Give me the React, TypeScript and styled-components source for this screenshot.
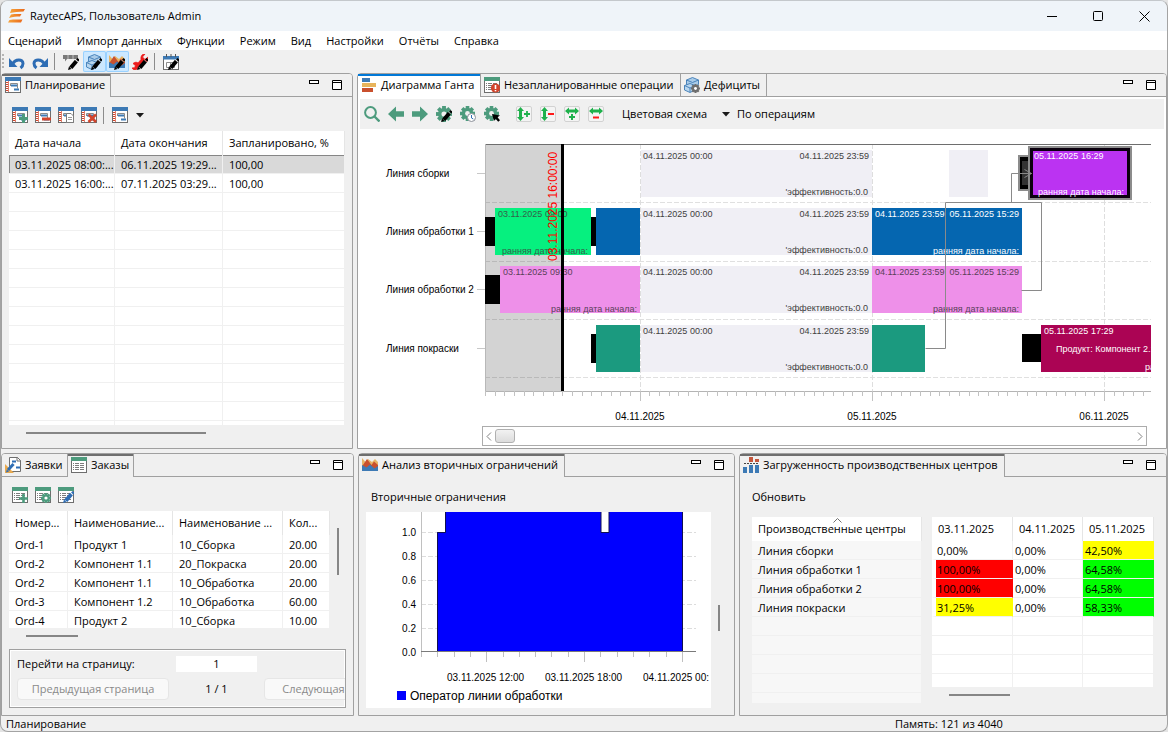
import React from "react";
import styled, { createGlobalStyle, css } from "styled-components";

const GlobalStyle = createGlobalStyle`
  *, *::before, *::after { box-sizing: border-box; }
  body {
    margin: 0;
    background: #e4e4e4;
    color: #000;
    font: 11px/16px "Open Sans", "Noto Sans", sans-serif;
  }
  button, input { font: inherit; color: inherit; }
  button { border: 0; padding: 0; background: none; white-space: nowrap; }
  svg { flex-shrink: 0; }
`;

/* ---------- window ---------- */

const Window = styled.div`
  min-height: 100vh;
  display: flex;
  flex-direction: column;
  border: 1px solid #a3a3a3;
  border-top-color: #c4c8cc;
  border-radius: 8px;
  overflow: hidden;
  background: #f0f0f0;
`;

const TitleBar = styled.header`
  height: 30px;
  display: flex;
  align-items: center;
  padding-left: 7px;
  background: #eff4f9;
`;

const Title = styled.h1`
  flex: 1;
  margin: 0 0 0 5px;
  font-size: 11px;
  font-weight: 400;
`;

const WindowButton = styled.button`
  width: 46px;
  height: 30px;
  display: grid;
  place-items: center;
`;

const MenuBar = styled.nav`
  height: 19px;
  display: flex;
  background: #fff;
`;

const MenuItem = styled.button`
  padding: 0 8px 0 7px;
  line-height: 19px;
`;

const MainToolbar = styled.div`
  height: 23px;
  display: flex;
  align-items: center;
  padding-left: 1px;
`;

const Grip = styled.span`
  width: 2px;
  height: 15px;
  margin-right: 2px;
  background: repeating-linear-gradient(#b4b4b4 0 2px, transparent 2px 4px);
`;

const Separator = styled.span`
  width: 1px;
  height: 17px;
  margin: 0 5px 0 2px;
  background: #8c8c8c;
`;

const IconButton = styled.button<{ $active?: boolean }>`
  width: 23px;
  height: 21px;
  display: flex;
  align-items: center;
  padding-left: 3px;
  border-radius: 2px;
  ${(p) =>
    p.$active &&
    css`
      background: #cce8ff;
      box-shadow: inset 0 0 0 1px #99d1ff;
    `}
`;

const Workspace = styled.main`
  flex: 1;
  display: grid;
  grid-template-rows: minmax(376px, 376fr) minmax(263px, 263fr);
  gap: 4px;
`;

const PanelRow = styled.div<{ $columns: string }>`
  display: grid;
  grid-template-columns: ${(p) => p.$columns};
  gap: 4px;
`;

const StatusBar = styled.footer`
  height: 15px;
  display: grid;
  grid-template-columns: 889fr 272fr;
  padding-left: 5px;
  line-height: 15px;
`;

/* ---------- panels ---------- */

const PanelFrame = styled.section<{ $white?: boolean }>`
  min-width: 0;
  display: flex;
  flex-direction: column;
  border: 1px solid #a0a0a0;
  border-radius: 4px 4px 0 0;
  background: ${(p) => (p.$white ? "#fff" : "#f0f0f0")};
`;

const PanelHeader = styled.div`
  height: 23px;
  display: flex;
  background: #f0f0f0;
  border-radius: 3px 3px 0 0;
`;

const Tab = styled.button<{ $width: number; $state: "idle" | "active" | "focused" }>`
  width: ${(p) => p.$width}px;
  display: flex;
  align-items: center;
  gap: 4px;
  padding: 0 0 0 3px;
  border-right: 1px solid #a0a0a0;
  border-bottom: 1px solid #a0a0a0;
  ${(p) =>
    p.$state !== "idle" &&
    css`
      border-bottom: 0;
      padding-bottom: 1px;
      background: ${p.$state === "focused" ? "#fff" : "#f0f0f0"};
      box-shadow: inset 0 2px 0 ${p.$state === "focused" ? "#0078d7" : "#6e6e6e"};
    `}
`;

const HeaderTail = styled.div`
  flex: 1;
  display: flex;
  justify-content: flex-end;
  align-items: flex-start;
  gap: 12px;
  padding: 5px 9px 0 0;
  border-bottom: 1px solid #a0a0a0;
`;

const HeaderButton = styled.button`
  width: 11px;
  height: 11px;
  display: block;
`;

const PanelBody = styled.div`
  flex: 1;
  min-height: 0;
  display: flex;
  flex-direction: column;
  padding: 0 7px;
`;

const PanelToolbar = styled.div`
  height: 34px;
  display: flex;
  align-items: center;
  padding-top: 2px;
`;

const ArrowButton = styled.button`
  width: 16px;
  height: 16px;
  display: grid;
  place-items: center;
`;

const Split = styled.div`
  flex: 1 1 0;
  min-height: 0;
  display: flex;
`;

const VerticalTrack = styled.div<{ $width: number; $offset: number }>`
  width: ${(p) => p.$width}px;
  padding: ${(p) => p.$offset}px 0 0 7px;
`;

const HorizontalTrack = styled.div<{ $height: number }>`
  height: ${(p) => p.$height}px;
  padding: 7px 0 0 17px;
`;

const Thumb = styled.div<{ $width: number; $height: number }>`
  width: ${(p) => p.$width}px;
  height: ${(p) => p.$height}px;
  background: #868686;
`;

/* ---------- tables ---------- */

const TableBox = styled.div<{ $muted?: boolean; $grow?: number }>`
  flex: ${(p) => p.$grow ?? 1} 1 0;
  min-width: 0;
  min-height: 0;
  overflow: hidden;
  background: ${(p) => (p.$muted ? "#f7f7f7" : "#fff")};
`;

const DataTable = styled.table`
  width: 100%;
  table-layout: fixed;
  border-collapse: separate;
  border-spacing: 0;
`;

const HeadCell = styled.th`
  height: 24px;
  padding: 0 0 0 6px;
  border-right: 1px solid #e5e5e5;
  background: #fff;
  font-weight: 400;
  text-align: left;
  white-space: nowrap;
  overflow: hidden;
`;

const SortedHeadCell = styled(HeadCell)`
  position: relative;
`;

const SortMark = styled.svg`
  position: absolute;
  top: 1px;
  left: 50%;
  margin-left: -4px;
`;

const Cell = styled.td`
  height: 19px;
  padding: 2px 0 0 6px;
  border-right: 1px solid #f0f0f0;
  border-bottom: 1px solid #f0f0f0;
  line-height: 16px;
  white-space: nowrap;
  overflow: hidden;
`;

const BodyRow = styled.tr<{ $selected?: boolean }>`
  ${(p) =>
    p.$selected &&
    css`
      & > td {
        background: #d9d9d9;
        box-shadow: inset 0 1px 0 #868686;
      }
      & > td:first-child {
        box-shadow: inset 1px 1px 0 #868686;
      }
    `}
`;

const LoadCell = styled(Cell)<{ $fill?: string; $first?: boolean }>`
  padding-left: ${(p) => (p.$first ? 1 : 2)}px;
  border-left: ${(p) => (p.$first ? "4px solid #fff" : 0)};
  border-right-color: ${(p) => p.$fill ?? "#f0f0f0"};
  background: ${(p) => p.$fill ?? "transparent"};
`;

/* ---------- pagination ---------- */

const Pager = styled.fieldset`
  height: 59px;
  min-width: 0;
  margin: 0 0 7px;
  padding: 6px 0 0 7px;
  display: grid;
  grid-template-columns: 152px 81px 152px;
  grid-template-rows: 16px 22px;
  gap: 6px 7px;
  align-items: center;
  border: 1px solid #a0a0a0;
  box-shadow: inset 0 0 0 1px #fff;
  overflow: hidden;
`;

const PageInput = styled.input`
  width: 81px;
  height: 16px;
  padding: 0;
  border: 0;
  background: #fff;
  text-align: center;
`;

const PageButton = styled.button`
  height: 22px;
  border: 1px solid #e6e6e6;
  border-radius: 4px;
  background: #f9f9f9;
  color: #8a8a8a;
`;

const PageCount = styled.span`
  text-align: center;
`;

const PagerGap = styled.span``;

/* ---------- Gantt ---------- */

const GanttToolbar = styled.div`
  height: 30px;
  margin: 2px 2px 0;
  display: flex;
  align-items: center;
  background: #f0f0f0;
`;

const GanttTool = styled.button<{ $gap?: number }>`
  width: 24px;
  height: 24px;
  margin-left: ${(p) => p.$gap ?? 0}px;
  display: grid;
  place-items: center;
`;

const SchemeButton = styled.button`
  display: flex;
  align-items: center;
  justify-content: space-between;
  width: 109px;
  margin-left: 14px;
`;

const ModeButton = styled.button`
  margin-left: 6px;
`;

const GanttCanvas = styled.svg`
  flex: 1 0 297px;
  width: calc(100% - 15px);
  min-height: 297px;
  display: block;
  overflow: hidden;
  font-family: "Liberation Sans", Arial, sans-serif;
`;

const GanttScroll = styled.div`
  height: 20px;
  margin: 0 19px 2px 124px;
  padding: 0 3px;
  display: flex;
  align-items: center;
  gap: 3px;
  border: 1px solid #acacac;
`;

const ScrollThumb = styled.span`
  width: 20px;
  height: 14px;
  border: 1px solid #b0b0b0;
  border-radius: 3px;
  background: linear-gradient(#f2f2f2, #dcdcdc);
`;

const Spacer = styled.span`
  flex: 1;
`;

/* ---------- charts and labels ---------- */

const Caption = styled.div`
  height: 35px;
  padding: 12px 0 0 5px;
`;

const LoadBody = styled(PanelBody)`
  padding: 0 12px 12px;
`;

const RefreshButton = styled.button`
  height: 40px;
  align-self: flex-start;
`;

const ChartBox = styled.div`
  flex: 1;
  min-width: 0;
  margin-bottom: 7px;
  background: #fff;
`;

const ChartSvg = styled.svg`
  width: 100%;
  height: 196px;
  display: block;
  overflow: hidden;
  font-family: "Liberation Sans", Arial, sans-serif;
`;

const RightColumn = styled.div`
  flex: 222 1 0;
  min-width: 0;
  margin-left: 10px;
  display: flex;
  flex-direction: column;
`;

/* ---------- icons ---------- */

const Icon = ({ children }: { children: React.ReactNode }) => (
  <svg width="16" height="16" viewBox="0 0 16 16" aria-hidden="true">
    {children}
  </svg>
);

const LogoIcon = () => (
  <svg width="17" height="16" viewBox="0 0 17 16" aria-hidden="true">
    <defs>
      <linearGradient id="logo" x1="0" x2="1">
        <stop offset="0" stopColor="#f5a33a" />
        <stop offset="1" stopColor="#ea6a1c" />
      </linearGradient>
    </defs>
    <g fill="url(#logo)">
      <path d="M3.500 1H17l-1.500 2.500C10 4 6 4 2 5z" />
      <path d="M3 6.500c4-.8 7-.5 10.500-.5L12 8.500c-4 0-7 0-11 1.500z" />
      <path d="M1.500 12c4-.8 8-.5 13-.5L13 14.500H0z" />
    </g>
  </svg>
);

const Pencil = ({ color = "#000" }: { color?: string }) => (
  <>
    <path d="M7.800 13.800L13.500 7" stroke={color} strokeWidth="4" />
    <path d="M13.800 4.800l2.200 2" stroke={color} strokeWidth="2.200" />
    <path d="M5 16l1-3.500 2.500 2.500z" fill={color} />
    <path d="M12.200 5.800l2.600 2.300" stroke="#fff" strokeWidth=".5" />
  </>
);

const Gear = ({ cx, cy, r, color, hole = "#f0f0f0" }: { cx: number; cy: number; r: number; color: string; hole?: string }) => (
  <g fill={color} transform={`translate(${cx} ${cy})`}>
    {[0, 45, 90, 135].map((a) => (
      <rect key={a} x={-r * 0.24} y={-r} width={r * 0.48} height={r * 2} transform={`rotate(${a})`} />
    ))}
    <circle r={r * 0.76} />
    <circle r={r * 0.32} fill={hole} />
  </g>
);

const UndoIcon = () => (
  <Icon>
    <path d="M4 9.500C6 5 14 4.500 14 9.500c0 2-.8 3.200-2.500 4.500" fill="none" stroke="#2e6db4" strokeWidth="3" />
    <path d="M0 4v9h8.500z" fill="#2e6db4" />
  </Icon>
);

const RedoIcon = () => (
  <Icon>
    <path d="M12 9.500C10 5 2 4.500 2 9.500c0 2 .8 3.200 2.500 4.500" fill="none" stroke="#2e6db4" strokeWidth="3" />
    <path d="M16 4v9H7.500z" fill="#2e6db4" />
  </Icon>
);

const CommentEditIcon = () => (
  <Icon>
    <path d="M0 1h15v4H4L2 7.500V5H0z" fill="#7a7a7a" />
    <path d="M5 1v4M10 1v4" stroke="#f0f0f0" strokeWidth=".6" />
    <Pencil />
  </Icon>
);

const Boxes = () => (
  <>
    <path d="M8.500.5l6 2.500v4.500l-6 3-6-3V3z" fill="#a9cbe8" stroke="#3d7ab5" strokeWidth=".9" />
    <path d="M2.500 3l6 2.500 6-2.500" fill="none" stroke="#3d7ab5" strokeWidth=".9" />
    <path d="M6 6.500l5 2v4.500l-5 2.500-5.500-2.500V8.500z" fill="#b9d6ee" stroke="#3d7ab5" strokeWidth=".9" />
    <path d="M.5 8.500L6 11l5-2.500M6 11v4" fill="none" stroke="#3d7ab5" strokeWidth=".9" />
  </>
);

const BoxesEditIcon = () => (
  <Icon>
    <Boxes />
    <Pencil />
  </Icon>
);

const DeficitIcon = () => (
  <Icon>
    <Boxes />
    <Gear cx={11.500} cy={11.500} r={4.500} color="#6e6e6e" hole="#fff" />
  </Icon>
);

const Area = () => (
  <>
    <path d="M0 14V1l3.500 4L6 2l4 3 3-3 3 3v9z" fill="#e8b465" />
    <path d="M0 9.500L5 2l4.500 6L12 4.500 16 8v6H0z" fill="#c9502e" />
    <path d="M0 14V8l4.500 2.500L8 7.500l4.500 4L16 9v5z" fill="#3d7ab5" />
  </>
);

const AreaIcon = () => (
  <Icon>
    <Area />
  </Icon>
);

const AreaEditIcon = () => (
  <Icon>
    <Area />
    <Pencil />
  </Icon>
);

const WrenchEditIcon = () => (
  <Icon>
    <path d="M13 0l-2.500 3L13 5.500l3-2.500c.6 4.500-2.500 6.500-5 5.500L6 13c-.8 3.500-4.500 4-6 1l2.800-.3.5-2.200L1 9.500C3 7.800 5 8 6 9l3-3.500C8.500 2 10 0 13 0z" fill="#ec1c1c" stroke="#ec1c1c" strokeWidth=".8" />
    <Pencil />
  </Icon>
);

const CalendarEditIcon = () => (
  <Icon>
    <rect x=".5" y="2.500" width="15" height="13" fill="#fff" stroke="#6e6e6e" />
    <path d="M0 2h16v3.500H0z" fill="#3d7ab5" />
    <path d="M3.500 0v3M8 0v3M12.500 0v3" stroke="#555" />
    <path d="M3.500 8.500h8v5h-8zM7.500 8.500v5" fill="none" stroke="#8c8c8c" />
    <Pencil />
  </Icon>
);

const PlanBase = () => (
  <>
    <rect x=".5" y=".5" width="15" height="15" fill="#fff" stroke="#6e6e6e" />
    <path d="M0 0h16v4H0z" fill="#3d7ab5" />
    <path d="M2 5v10" stroke="#d2452c" strokeWidth="2" strokeDasharray="1 1" />
    <path d="M3.500 4v11" stroke="#d2452c" strokeWidth=".7" />
    <path d="M5.500 9V6.500h7v5" stroke="#8a8a8a" fill="none" />
    <path d="M6 8.500h6M9 12.500h5" stroke="#3d7ab5" strokeWidth="2" />
  </>
);

type Overlay = "add" | "remove" | "copy" | "delete" | "none";

const PlanIcon = ({ overlay = "none" }: { overlay?: Overlay }) => (
  <Icon>
    <PlanBase />
    {overlay === "add" && <path d="M11.500 7v9M7 11.500h9" stroke="#4d9b7d" strokeWidth="3" />}
    {overlay === "remove" && <path d="M7 12h9" stroke="#d2452c" strokeWidth="3" />}
    {overlay === "copy" && (
      <>
        <path d="M8.500 6.500h4.500l2.500 2.500v6.500h-7z" fill="#fff" stroke="#7c7c7c" />
        <path d="M10 10.500h4M10 12.500h4" stroke="#9a9a9a" />
      </>
    )}
    {overlay === "delete" && <path d="M7.500 7.500l7.500 7.500M15 7.500L7.500 15" stroke="#d2452c" strokeWidth="2.600" />}
  </Icon>
);

const ListIcon = ({ children }: { children?: React.ReactNode }) => (
  <Icon>
    <rect x=".5" y="1" width="15" height="14.500" fill="#fff" stroke="#6e6e6e" />
    <path d="M0 0h16v4H0z" fill="#4d9b7d" />
    <path d="M2 6.500h12M2 8.500h12M2 10.500h12M2 12.500h12" stroke="#7c7c7c" strokeDasharray="1 1 4 1 4 1" />
    {children}
  </Icon>
);

const UnplannedIcon = () => (
  <ListIcon>
    <circle cx="11.500" cy="11" r="4.600" fill="#d2452c" />
    <path d="M11.500 8v4M11.500 13v1.200" stroke="#fff" strokeWidth="1.600" />
  </ListIcon>
);

const OrderAddIcon = () => (
  <ListIcon>
    <path d="M11.500 7v9M7 11.500h9" stroke="#4d9b7d" strokeWidth="2.600" />
  </ListIcon>
);

const OrderGearIcon = () => (
  <ListIcon>
    <Gear cx={11} cy={11} r={5} color="#4d9b7d" hole="#fff" />
  </ListIcon>
);

const OrderEditIcon = () => (
  <ListIcon>
    <Pencil color="#2e6db4" />
  </ListIcon>
);

const RequestIcon = () => (
  <Icon>
    <path d="M4.500.5h8l3 3v11h-11z" fill="#fff" stroke="#6e6e6e" />
    <path d="M12 0v4h4" fill="none" stroke="#6e6e6e" />
    <path d="M7 4.500h4M11 10.500h4" stroke="#2e6db4" strokeWidth="2" />
    <path d="M0 7v9h9z" fill="#e8a94e" />
    <path d="M3 13L8.500 7" stroke="#2e6db4" strokeWidth="3" />
    <path d="M1 15.500l.8-3 2.200 2z" fill="#2e6db4" />
  </Icon>
);

const GanttIcon = () => (
  <Icon>
    <path d="M1 1h8v4H1z" fill="#3d7ab5" />
    <path d="M1 6h14v4H1z" fill="#e8b45c" />
    <path d="M1 11h11v4H1z" fill="#c9502e" />
  </Icon>
);

const LoadIcon = () => (
  <Icon>
    <path d="M6 0h4v5H6zM12 2h4v3h-4z" fill="#c4563c" />
    <path d="M1 6.500h15" stroke="#444" strokeDasharray="2 1" />
    <path d="M0 10h4v6H0zM6 8h4v8H6zM12 8h4v8h-4z" fill="#3d7ab5" />
  </Icon>
);

const SearchIcon = () => (
  <Icon>
    <circle cx="6.500" cy="6.500" r="5.400" fill="none" stroke="#4d9b7d" strokeWidth="2" />
    <path d="M10.500 10.500l5 5" stroke="#4d9b7d" strokeWidth="2.400" />
  </Icon>
);

const ArrowLeftIcon = () => (
  <Icon>
    <path d="M0 8l8-7.500v4.800h8v5.400H8v4.800z" fill="#4d9b7d" />
  </Icon>
);

const ArrowRightIcon = () => (
  <Icon>
    <path d="M16 8L8 .5v4.800H0v5.400h8v4.800z" fill="#4d9b7d" />
  </Icon>
);

const GearEditIcon = () => (
  <Icon>
    <Gear cx={8} cy={8} r={8} color="#4d9b7d" />
    <Pencil />
  </Icon>
);

const GearClockIcon = () => (
  <Icon>
    <Gear cx={7.500} cy={7.500} r={7.500} color="#4d9b7d" />
    <circle cx="11.500" cy="11.500" r="4" fill="#fff" stroke="#8a8f98" />
    <path d="M11.500 9v3l1.800 1" fill="none" stroke="#2e6db4" />
  </Icon>
);

const GearCursorIcon = () => (
  <Icon>
    <Gear cx={7.500} cy={7.500} r={7.500} color="#4d9b7d" />
    <path d="M8 8l8 1.500-2.500 1.700 2.500 3-1.800 1.600-2.600-3L10 15z" fill="#000" />
  </Icon>
);

const ZoomIcon = ({ axis, sign }: { axis: "v" | "h"; sign: "+" | "-" }) => (
  <Icon>
    <rect x=".5" y=".5" width="15" height="15" rx="1.500" fill="#f4f4f4" stroke="#d2d2d2" />
    {axis === "v" ? (
      <path d="M4.500 1L8 5H6v6h2l-3.500 4L1 11h2V5H1z" fill="#1fb14c" />
    ) : (
      <path d="M1 5l4-3.500v2h6v-2L15 5l-4 3.500v-2H5v2z" fill="#1fb14c" />
    )}
    {axis === "v" && <path d={sign === "+" ? "M8 8h6M11 5v6" : "M8 8h6"} stroke={sign === "+" ? "#1fb14c" : "#ff1a1a"} strokeWidth="1.800" />}
    {axis === "h" && <path d={sign === "+" ? "M5 11h6M8 8v6" : "M5 11.500h6"} stroke={sign === "+" ? "#1fb14c" : "#ff1a1a"} strokeWidth="2" />}
  </Icon>
);

const DownArrow = () => (
  <svg width="9" height="5" viewBox="0 0 9 5" aria-hidden="true">
    <path d="M0 0h8L4 4.500z" fill="#1a1a1a" />
  </svg>
);

const Chevron = ({ direction }: { direction: "left" | "right" }) => (
  <svg width="6" height="9" viewBox="0 0 6 9" aria-hidden="true">
    <path d={direction === "left" ? "M5 .5l-4 4 4 4" : "M1 .5l4 4-4 4"} fill="none" stroke="#808080" />
  </svg>
);

/* ---------- panel shell ---------- */

interface TabSpec {
  label: string;
  icon: React.ReactNode;
  width: number;
  state: "idle" | "active" | "focused";
}

const Panel = ({ tabs, white, children }: { tabs: TabSpec[]; white?: boolean; children: React.ReactNode }) => (
  <PanelFrame $white={white}>
    <PanelHeader role="tablist">
      {tabs.map((t) => (
        <Tab key={t.label} role="tab" aria-selected={t.state !== "idle"} $width={t.width} $state={t.state}>
          {t.icon}
          {t.label}
        </Tab>
      ))}
      <HeaderTail>
        <HeaderButton aria-label="Свернуть">
          <svg width="11" height="11" viewBox="0 0 11 11">
            <rect x=".5" y=".5" width="9" height="3" fill="#fff" stroke="#000" />
          </svg>
        </HeaderButton>
        <HeaderButton aria-label="Развернуть">
          <svg width="11" height="11" viewBox="0 0 11 11">
            <path d="M.5.5h9v9h-9zM.5 2.500h9" fill="#fff" stroke="#000" />
          </svg>
        </HeaderButton>
      </HeaderTail>
    </PanelHeader>
    {children}
  </PanelFrame>
);

const FillerRows = ({ rows, columns }: { rows: number; columns: number }) => (
  <>
    {Array.from({ length: rows }, (_, r) => (
      <BodyRow key={r} aria-hidden="true">
        {Array.from({ length: columns }, (_, c) => (
          <Cell key={c} />
        ))}
      </BodyRow>
    ))}
  </>
);

const Columns = ({ widths }: { widths: (number | undefined)[] }) => (
  <colgroup>
    {widths.map((w, i) => (
      <col key={i} width={w} />
    ))}
  </colgroup>
);

/* ---------- planning ---------- */

const plans = [
  ["03.11.2025 08:00:...", "06.11.2025 19:29...", "100,00"],
  ["03.11.2025 16:00:...", "07.11.2025 03:29...", "100,00"],
];

const PlanningPanel = () => (
  <Panel tabs={[{ label: "Планирование", icon: <PlanIcon />, width: 109, state: "active" }]}>
    <PanelBody>
      <PanelToolbar>
        <IconButton aria-label="Добавить"><PlanIcon overlay="add" /></IconButton>
        <IconButton aria-label="Убрать"><PlanIcon overlay="remove" /></IconButton>
        <IconButton aria-label="Копировать"><PlanIcon overlay="copy" /></IconButton>
        <IconButton aria-label="Удалить"><PlanIcon overlay="delete" /></IconButton>
        <Separator />
        <IconButton aria-label="План"><PlanIcon /></IconButton>
        <ArrowButton aria-label="Выбрать план"><DownArrow /></ArrowButton>
      </PanelToolbar>
      <TableBox>
        <DataTable>
          <Columns widths={[106, 108, undefined]} />
          <thead>
            <tr>
              <HeadCell>Дата начала</HeadCell>
              <HeadCell>Дата окончания</HeadCell>
              <HeadCell>Запланировано, %</HeadCell>
            </tr>
          </thead>
          <tbody>
            {plans.map((row, i) => (
              <BodyRow key={row[0]} $selected={i === 0}>
                {row.map((v) => (
                  <Cell key={v}>{v}</Cell>
                ))}
              </BodyRow>
            ))}
            <FillerRows rows={13} columns={3} />
          </tbody>
        </DataTable>
      </TableBox>
      <HorizontalTrack $height={23}><Thumb $width={180} $height={2} /></HorizontalTrack>
    </PanelBody>
  </Panel>
);

/* ---------- Gantt chart ---------- */

const PLOT_LEFT = 127;
const PLOT_TOP = 15;
const AXIS_Y = 262;
const BAR_HEIGHT = 47;

/* Horizontal position of a moment given in hours since 03.11.2025 08:00. */
const at = (hours: number) => Math.round(PLOT_LEFT + hours * 9.67);
const rowTop = (row: number) => [21, 79, 137, 196][row];

const lines = ["Линия сборки", "Линия обработки 1", "Линия обработки 2", "Линия покраски"];

interface Bar {
  row: number;
  from: number;
  to: number;
  fill: string;
  ink?: string;
  setup?: number;
  start?: string;
  end?: string;
  note?: string;
}

const bars: Bar[] = [
  { row: 0, from: 48, to: 52, fill: "#f0eff5" },
  { row: 1, from: 1, to: 11, fill: "#06f07f", ink: "#35604a", setup: 0, start: "03.11.2025 09:00", note: "ранняя дата начала:" },
  { row: 1, from: 11.5, to: 16, fill: "#0566b0", setup: 11 },
  { row: 1, from: 40, to: 55.5, fill: "#0566b0", ink: "#fff", start: "04.11.2025 23:59", end: "05.11.2025 15:29", note: "ранняя дата начала:" },
  { row: 2, from: 1.5, to: 16, fill: "#ee90e9", ink: "#5a4058", setup: 0, start: "03.11.2025 09:30", note: "ранняя дата начала:" },
  { row: 2, from: 40, to: 55.5, fill: "#ee90e9", ink: "#5a4058", start: "04.11.2025 23:59", end: "05.11.2025 15:29", note: "ранняя дата начала:" },
  { row: 3, from: 11.5, to: 16, fill: "#1b9a7f", setup: 11 },
  { row: 3, from: 40, to: 45.5, fill: "#1b9a7f" },
];

const GanttBar = ({ bar }: { bar: Bar }) => {
  const y = rowTop(bar.row);
  const x = at(bar.from);
  const right = at(bar.to);
  return (
    <g fontSize="9" fill={bar.ink}>
      {bar.setup !== undefined && <rect x={at(bar.setup)} y={y + 9} width={x - at(bar.setup)} height={29} fill="#000" />}
      <rect x={x} y={y} width={right - x} height={BAR_HEIGHT} fill={bar.fill} />
      {bar.start && <text x={x + 3} y={y + 9}>{bar.start}</text>}
      {bar.end && <text x={right - 3} y={y + 9} textAnchor="end">{bar.end}</text>}
      {bar.note && <text x={right - 3} y={y + 46} textAnchor="end">{bar.note}</text>}
    </g>
  );
};

const GanttChart = () => (
  <GanttCanvas role="img" aria-label="Диаграмма Ганта">
    <rect x={PLOT_LEFT} y={PLOT_TOP} width={at(8) - PLOT_LEFT} height={AXIS_Y - PLOT_TOP} fill="#d3d3d3" />
    {[73, 132, 190, 248].map((y) => (
      <line key={y} x1={PLOT_LEFT} x2="100%" y1={y + 0.5} y2={y + 0.5} stroke="#000" strokeOpacity=".12" strokeDasharray="5 2" />
    ))}
    {[16, 40, 64].map((h) => (
      <line key={h} x1={at(h) + 0.5} x2={at(h) + 0.5} y1={PLOT_TOP} y2={AXIS_Y} stroke="#dedede" strokeDasharray="5 2" />
    ))}
    <line x1={PLOT_LEFT} x2="100%" y1={PLOT_TOP + 0.5} y2={PLOT_TOP + 0.5} stroke="#6e6e6e" />
    <line x1={PLOT_LEFT + 0.5} x2={PLOT_LEFT + 0.5} y1={PLOT_TOP} y2={AXIS_Y} stroke="#b8b8b8" />
    <line x1={PLOT_LEFT} x2="100%" y1={AXIS_Y + 0.5} y2={AXIS_Y + 0.5} stroke="#b4b4b4" />
    {Array.from({ length: 69 }, (_, h) => (
      <line key={h} x1={at(h) + 0.5} x2={at(h) + 0.5} y1={AXIS_Y} y2={h % 24 === 16 ? AXIS_Y + 10 : AXIS_Y + 5} stroke="#c2c2c2" />
    ))}
    {lines.map((name, row) => (
      <g key={name}>
        <text x="28" y={rowTop(row) + 27} fontSize="10">{name}</text>
        <line x1={PLOT_LEFT - 8} x2={PLOT_LEFT} y1={rowTop(row) + 23.5} y2={rowTop(row) + 23.5} stroke="#c8c8c8" />
        <rect x={at(16) + 1} y={rowTop(row)} width={at(40) - at(16) - 1} height={BAR_HEIGHT} fill="#f0eff5" />
        <g fontSize="9" fill="#404040">
          <text x={at(16) + 3} y={rowTop(row) + 9}>04.11.2025 00:00</text>
          <text x={at(40) - 3} y={rowTop(row) + 9} textAnchor="end">04.11.2025 23:59</text>
          <text x={at(40) - 4} y={rowTop(row) + 45} textAnchor="end">'эффективность:0.0</text>
        </g>
      </g>
    ))}
    {bars.map((bar, i) => (
      <GanttBar key={i} bar={bar} />
    ))}

    {/* finishing operation that runs past the visible range */}
    <g fontSize="9" fill="#fff">
      <rect x="664" y="205" width="20" height="28" fill="#000" />
      <rect x="683" y="196" width="2000" height={BAR_HEIGHT} fill="#ab0454" />
      <text x="686" y="205">05.11.2025 17:29</text>
      <text x="698" y="223">Продукт: Компонент 2.1</text>
      <text x="787" y="241">ранняя дата начала:</text>
    </g>

    {/* selected operation */}
    <rect x="660" y="26" width="12" height="36" fill="#8c8c8c" />
    <rect x="662" y="28" width="10" height="32" fill="#000" />
    <rect x="664" y="32" width="8" height="24" fill="#333" />
    <rect x="670" y="17" width="104" height="54" fill="#8c8c8c" />
    <rect x="672" y="19" width="100" height="50" fill="#0b000f" />
    <rect x="675" y="22" width="94" height="44" fill="#bb33f2" />
    <g fontSize="9" fill="#fff">
      <text x="676" y="30">05.11.2025 16:29</text>
      <text x="766" y="66" textAnchor="end">ранняя дата начала:</text>
    </g>

    {/* links between operations */}
    <path d="M567.500 219.500h20v-146h96v88h-20M653.500 73.500v-29h20M666.500 40.500l7 4-7 4" fill="none" stroke="#8a8a8a" />

    {/* current moment */}
    <text transform="translate(199 132) rotate(-90)" fontSize="12" fill="#f00">03.11.2025 16:00:00</text>
    <rect x={at(8) - 1} y={PLOT_TOP} width="3" height={AXIS_Y - PLOT_TOP} fill="#000" />

    <g fontSize="10" textAnchor="middle">
      <text x={at(16)} y="291">04.11.2025</text>
      <text x={at(40)} y="291">05.11.2025</text>
      <text x={at(64)} y="291">06.11.2025</text>
    </g>
  </GanttCanvas>
);

const GanttPanel = () => (
  <Panel
    white
    tabs={[
      { label: "Диаграмма Ганта", icon: <GanttIcon />, width: 123, state: "focused" },
      { label: "Незапланированные операции", icon: <UnplannedIcon />, width: 200, state: "idle" },
      { label: "Дефициты", icon: <DeficitIcon />, width: 86, state: "idle" },
    ]}
  >
    <GanttToolbar>
      <GanttTool aria-label="Поиск"><SearchIcon /></GanttTool>
      <GanttTool aria-label="Назад"><ArrowLeftIcon /></GanttTool>
      <GanttTool aria-label="Вперёд"><ArrowRightIcon /></GanttTool>
      <GanttTool aria-label="Изменить"><GearEditIcon /></GanttTool>
      <GanttTool aria-label="Время"><GearClockIcon /></GanttTool>
      <GanttTool aria-label="Выбор"><GearCursorIcon /></GanttTool>
      <GanttTool aria-label="Увеличить по вертикали" $gap={8}><ZoomIcon axis="v" sign="+" /></GanttTool>
      <GanttTool aria-label="Уменьшить по вертикали"><ZoomIcon axis="v" sign="-" /></GanttTool>
      <GanttTool aria-label="Увеличить по горизонтали"><ZoomIcon axis="h" sign="+" /></GanttTool>
      <GanttTool aria-label="Уменьшить по горизонтали"><ZoomIcon axis="h" sign="-" /></GanttTool>
      <SchemeButton>Цветовая схема <DownArrow /></SchemeButton>
      <ModeButton>По операциям</ModeButton>
    </GanttToolbar>
    <GanttChart />
    <GanttScroll>
      <Chevron direction="left" />
      <ScrollThumb />
      <Spacer />
      <Chevron direction="right" />
    </GanttScroll>
  </Panel>
);

/* ---------- orders ---------- */

const orders = [
  ["Ord-1", "Продукт 1", "10_Сборка", "20.00"],
  ["Ord-2", "Компонент 1.1", "20_Покраска", "20.00"],
  ["Ord-2", "Компонент 1.1", "10_Обработка", "20.00"],
  ["Ord-3", "Компонент 1.2", "10_Обработка", "60.00"],
  ["Ord-4", "Продукт 2", "10_Сборка", "10.00"],
];

const OrdersPanel = () => (
  <Panel
    tabs={[
      { label: "Заявки", icon: <RequestIcon />, width: 66, state: "idle" },
      { label: "Заказы", icon: <ListIcon />, width: 66, state: "active" },
    ]}
  >
    <PanelBody>
      <PanelToolbar>
        <IconButton aria-label="Добавить заказ"><OrderAddIcon /></IconButton>
        <IconButton aria-label="Настроить заказ"><OrderGearIcon /></IconButton>
        <IconButton aria-label="Изменить заказ"><OrderEditIcon /></IconButton>
      </PanelToolbar>
      <Split>
        <TableBox>
          <DataTable>
            <Columns widths={[59, 105, 110, undefined]} />
            <thead>
              <tr>
                <HeadCell>Номер...</HeadCell>
                <HeadCell>Наименование...</HeadCell>
                <HeadCell>Наименование ...</HeadCell>
                <HeadCell>Кол...</HeadCell>
              </tr>
            </thead>
            <tbody>
              {orders.map((row, i) => (
                <BodyRow key={i}>
                  {row.map((v, c) => (
                    <Cell key={c}>{v}</Cell>
                  ))}
                </BodyRow>
              ))}
            </tbody>
          </DataTable>
        </TableBox>
        <VerticalTrack $width={16} $offset={17}><Thumb $width={2} $height={47} /></VerticalTrack>
      </Split>
      <HorizontalTrack $height={21}><Thumb $width={52} $height={2} /></HorizontalTrack>
      <Pager>
        <label htmlFor="page">Перейти на страницу:</label>
        <PageInput id="page" defaultValue="1" />
        <PagerGap />
        <PageButton disabled>Предыдущая страница</PageButton>
        <PageCount>1 / 1</PageCount>
        <PageButton disabled>Следующая страница</PageButton>
      </Pager>
    </PanelBody>
  </Panel>
);

/* ---------- secondary constraints ---------- */

const constraintLevels = ["1.0", "0.8", "0.6", "0.4", "0.2", "0.0"];

const ConstraintsPanel = () => (
  <Panel tabs={[{ label: "Анализ вторичных ограничений", icon: <AreaIcon />, width: 206, state: "active" }]}>
    <PanelBody>
      <Caption>Вторичные ограничения</Caption>
      <Split>
        <ChartBox>
          <ChartSvg role="img" aria-label="Вторичные ограничения">
            {constraintLevels.map((level, i) => (
              <g key={level}>
                <text x="50" y={24 + i * 24} fontSize="10" textAnchor="end">{level}</text>
                {i < 5 && <line x1="55" x2="330" y1={20.5 + i * 24} y2={20.5 + i * 24} stroke="#dcdcdc" strokeDasharray="5 2" />}
              </g>
            ))}
            <line x1="55.500" x2="55.500" y1="0" y2="140" stroke="#c0c0c0" />
            {Array.from({ length: 17 }, (_, i) => {
              const x = Math.round(55 + i * 16.3) + 0.5;
              return <line key={i} x1={x} x2={x} y1="140" y2={i % 6 === 4 ? 150 : 145} stroke="#c0c0c0" />;
            })}
            <path d="M71 140V20h8V0h156v20h8V0h74v140z" fill="#00f" />
            <path d="M71.500 140V20.500h8V0M235 0v20.500h8V0M316.500 0v140" fill="none" stroke="#101050" />
            <line x1="55" x2="330" y1="139.500" y2="139.500" stroke="#7a7a7a" />
            <g fontSize="10">
              <text x="81" y="169">03.11.2025 12:00</text>
              <text x="179" y="169">03.11.2025 18:00</text>
              <svg x="277" y="155" width="66" height="20">
                <text x="0" y="14">04.11.2025 00:00</text>
              </svg>
            </g>
            <rect x="31" y="179" width="9" height="9" fill="#00f" />
            <text x="44" y="188" fontSize="12">Оператор линии обработки</text>
          </ChartSvg>
        </ChartBox>
        <VerticalTrack $width={16} $offset={93}><Thumb $width={2} $height={26} /></VerticalTrack>
      </Split>
    </PanelBody>
  </Panel>
);

/* ---------- work centre load ---------- */

const loads: [string, string][][] = [
  [["0,00%", ""], ["0,00%", ""], ["42,50%", "#ff0"]],
  [["100,00%", "#f00"], ["0,00%", ""], ["64,58%", "#0f0"]],
  [["100,00%", "#f00"], ["0,00%", ""], ["64,58%", "#0f0"]],
  [["31,25%", "#ff0"], ["0,00%", ""], ["58,33%", "#0f0"]],
];

const LoadPanel = () => (
  <Panel tabs={[{ label: "Загруженность производственных центров", icon: <LoadIcon />, width: 265, state: "active" }]}>
    <LoadBody>
      <RefreshButton>Обновить</RefreshButton>
      <Split>
        <TableBox $muted $grow={170}>
          <DataTable>
            <thead>
              <tr>
                <SortedHeadCell aria-sort="ascending">
                  <SortMark width="9" height="5" viewBox="0 0 9 5">
                    <path d="M.5 4.500l4-4 4 4" fill="none" stroke="#707070" />
                  </SortMark>
                  Производственные центры
                </SortedHeadCell>
              </tr>
            </thead>
            <tbody>
              {lines.map((name) => (
                <BodyRow key={name}><Cell>{name}</Cell></BodyRow>
              ))}
              <FillerRows rows={5} columns={1} />
            </tbody>
          </DataTable>
        </TableBox>
        <RightColumn>
          <TableBox>
            <DataTable>
              <Columns widths={[81, 70, undefined]} />
              <thead>
                <tr>
                  <HeadCell>03.11.2025</HeadCell>
                  <HeadCell>04.11.2025</HeadCell>
                  <HeadCell>05.11.2025</HeadCell>
                </tr>
              </thead>
              <tbody>
                {loads.map((row, r) => (
                  <BodyRow key={r}>
                    {row.map(([value, fill], c) => (
                      <LoadCell key={c} $fill={fill || undefined} $first={c === 0}>{value}</LoadCell>
                    ))}
                  </BodyRow>
                ))}
                <FillerRows rows={5} columns={3} />
              </tbody>
            </DataTable>
          </TableBox>
          <HorizontalTrack $height={16}><Thumb $width={61} $height={2} /></HorizontalTrack>
        </RightColumn>
      </Split>
    </LoadBody>
  </Panel>
);

/* ---------- application ---------- */

const menu = ["Сценарий", "Импорт данных", "Функции", "Режим", "Вид", "Настройки", "Отчёты", "Справка"];

export default function App() {
  return (
    <>
      <GlobalStyle />
      <Window>
        <TitleBar>
          <LogoIcon />
          <Title>RaytecAPS, Пользователь Admin</Title>
          <WindowButton aria-label="Свернуть окно">
            <svg width="11" height="11" viewBox="0 0 11 11"><path d="M0 5.500h10" stroke="#000" /></svg>
          </WindowButton>
          <WindowButton aria-label="Развернуть окно">
            <svg width="11" height="11" viewBox="0 0 11 11"><rect x=".5" y=".5" width="9" height="9" rx="1" fill="none" stroke="#000" /></svg>
          </WindowButton>
          <WindowButton aria-label="Закрыть окно">
            <svg width="11" height="11" viewBox="0 0 11 11"><path d="M.5.5l10 10M10.500.5l-10 10" stroke="#000" /></svg>
          </WindowButton>
        </TitleBar>
        <MenuBar>
          {menu.map((item) => (
            <MenuItem key={item}>{item}</MenuItem>
          ))}
        </MenuBar>
        <MainToolbar>
          <Grip />
          <IconButton aria-label="Отменить"><UndoIcon /></IconButton>
          <IconButton aria-label="Повторить"><RedoIcon /></IconButton>
          <Separator />
          <IconButton aria-label="Комментарии"><CommentEditIcon /></IconButton>
          <IconButton $active aria-label="Дефициты"><BoxesEditIcon /></IconButton>
          <IconButton $active aria-label="Ограничения"><AreaEditIcon /></IconButton>
          <IconButton aria-label="Обслуживание"><WrenchEditIcon /></IconButton>
          <Separator />
          <IconButton aria-label="Календарь"><CalendarEditIcon /></IconButton>
        </MainToolbar>
        <Workspace>
          <PanelRow $columns="minmax(0, 352fr) minmax(0, 810fr)">
            <PlanningPanel />
            <GanttPanel />
          </PanelRow>
          <PanelRow $columns="minmax(0, 353fr) minmax(0, 377fr) minmax(0, 428fr)">
            <OrdersPanel />
            <ConstraintsPanel />
            <LoadPanel />
          </PanelRow>
        </Workspace>
        <StatusBar>
          <span>Планирование</span>
          <span>Память: 121 из 4040</span>
        </StatusBar>
      </Window>
    </>
  );
}
